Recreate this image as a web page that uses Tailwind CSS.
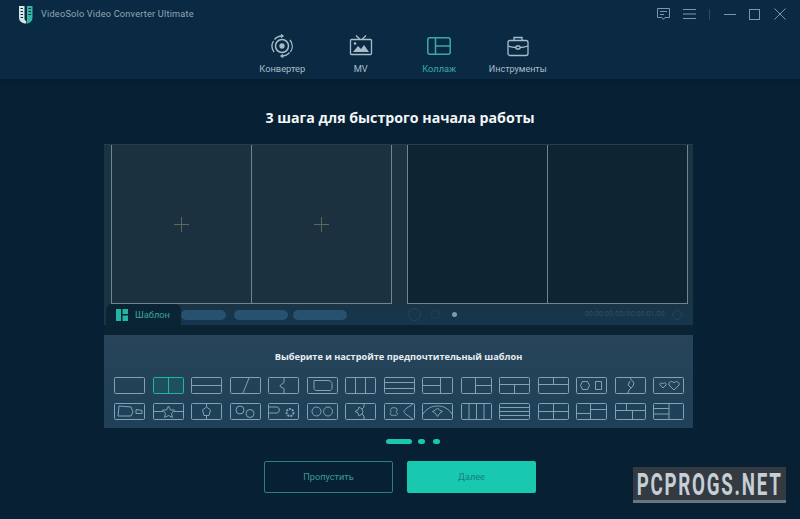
<!DOCTYPE html>
<html lang="en">

<head>
    <meta charset="UTF-8">
    <meta name="viewport" content="width=device-width, initial-scale=1.0">
    <title>VideoSolo Video Converter Ultimate</title>
    <script src="https://cdn.jsdelivr.net/npm/@tailwindcss/browser@4"></script>
</head>

<body class="relative w-[800px] h-[519px] overflow-hidden bg-[#082033] font-['Roboto',sans-serif]">

    <!-- header -->
    <header class="h-[79px] bg-[#0a2a43] relative">
        <div class="flex items-center h-7 pl-[19px]">
            <svg width="14" height="19" viewBox="0 0 14 19" fill="none">
                <path d="M0 1h5.500v12.500c0 1.500 1 2.500 1.500 2.500v2.500C3 18.500 0 16 0 12.500z" fill="#d8e6ea" />
                <path d="M8 1h5.500v11.500c0 3.500-2.500 6-6 6V16c.5 0 .5-1 .5-2.500z" fill="#35b5a5" />
                <path d="M1.500 3.500h2.500M1.500 6.500h2.500M1.500 9.500h2.500M1.500 12.500h2.500M9.500 3.500h2.500M9.500 6.500h2.500M9.500 9.500h2.500" stroke="#0a2a43" stroke-width="1" />
            </svg>
            <span class="ml-2 text-[9.200px] text-[#8fa6b4] tracking-[0.2px]">VideoSolo Video Converter Ultimate</span>
        </div>

        <div class="absolute top-[7px] right-[14px] flex items-center text-[#7b98a8]">
            <svg class="mr-[12px]" width="15" height="14" viewBox="0 0 15 14" fill="none" stroke="currentColor">
                <path d="M1.500 1.500h12v9H9l-1.500 2-1.500-2H1.500z" />
                <path d="M4 4.500h7M4 7.500h4" />
            </svg>
            <svg class="mr-[13px]" width="13" height="12" viewBox="0 0 13 12" fill="none" stroke="currentColor">
                <path d="M0 1.500h13M0 6h13M0 10.500h13" />
            </svg>
            <div class="w-px h-[11px] bg-[#2b4c60] mr-[14px]"></div>
            <svg class="mr-[13px]" width="12" height="12" viewBox="0 0 12 12" fill="none" stroke="currentColor">
                <path d="M0 6.500h12" />
            </svg>
            <svg class="mr-[14px]" width="11" height="11" viewBox="0 0 11 11" fill="none" stroke="currentColor">
                <rect x="0.500" y="0.500" width="10" height="10" />
            </svg>
            <svg width="12" height="12" viewBox="0 0 12 12" fill="none" stroke="currentColor">
                <path d="M0.500 0.500l11 11M11.500 0.500l-11 11" />
            </svg>
        </div>

        <nav class="absolute top-[34px] left-[243px] grid grid-cols-4 w-[314px]">
            <div class="flex flex-col items-center text-[#a9bdc9]">
                <svg class="h-6" width="24" height="24" viewBox="0 0 24 24" fill="none" stroke="currentColor" stroke-width="1.300">
                    <path d="M4.500 5.500A10 10 0 0 1 12 2M19.500 18.500A10 10 0 0 1 12 22M4 18a10 10 0 0 1-.5-11M20 6a10 10 0 0 1 .5 12" />
                    <path d="M11 0.500l2 1.500-2 1.500M13 20.500L11 22l2 1.500" />
                    <circle cx="12" cy="12" r="6.500" stroke-width="1.500" />
                    <circle cx="12" cy="12" r="2" fill="currentColor" />
                </svg>
                <span class="mt-[5px] text-[9.300px] leading-3">Конвертер</span>
            </div>
            <div class="flex flex-col items-center text-[#a9bdc9]">
                <svg width="24" height="24" viewBox="0 0 24 24" fill="none" stroke="currentColor" stroke-width="1.300">
                    <rect x="1.500" y="5.500" width="21" height="15" rx="1" />
                    <path d="M7 1.500l4 4M17 1.500l-4 4" />
                    <path d="M4 18l5-6 3 3 3-4 5 7z" fill="currentColor" stroke="none" />
                    <circle cx="6" cy="9.500" r="1.300" fill="currentColor" stroke="none" />
                </svg>
                <span class="mt-[5px] text-[9.300px] leading-3">MV</span>
            </div>
            <div class="flex flex-col items-center text-[#3da9a5]">
                <svg width="24" height="24" viewBox="0 0 24 24" fill="none" stroke="currentColor" stroke-width="1.500">
                    <rect x="0.800" y="3.800" width="22.400" height="16.400" rx="2" />
                    <path d="M8.500 4v16M8.500 12h14.500" />
                </svg>
                <span class="mt-[5px] text-[9.300px] leading-3">Коллаж</span>
            </div>
            <div class="flex flex-col items-center text-[#a9bdc9]">
                <svg width="24" height="24" viewBox="0 0 24 24" fill="none" stroke="currentColor" stroke-width="1.300">
                    <rect x="2" y="6.500" width="20" height="15" rx="2" />
                    <path d="M8 6.500V3.500h8v3M2 12c3 1 6 1.500 8 1.500M22 12c-3 1-6 1.500-8 1.500" />
                    <rect x="10" y="12" width="4" height="3" rx="1" />
                </svg>
                <span class="mt-[5px] text-[9px] leading-3">Инструменты</span>
            </div>
        </nav>
    </header>
    <div class="h-[6px] bg-gradient-to-b from-[#071d2d] to-[#082033]"></div>

    <!-- main -->
    <main class="flex flex-col">
        <h1 class="mt-[22px] h-[21px] leading-[21px] text-center text-[14.200px] font-bold text-[#f2f6f8] font-['Open_Sans',sans-serif]">3 шага для быстрого начала работы</h1>

        <div class="mt-[16px] ml-[104px] w-[589px] h-[181px] border-t border-[#2a3b4f] bg-gradient-to-b from-[#1b3342] from-[85%] to-[#153650] relative">
            <div class="flex pl-[7px] gap-[15px]">
                <div class="w-[281px] h-[159px] grid grid-cols-2 border-x border-b border-[#6b8695] bg-[#1b3140]">
                    <div class="flex items-center justify-center border-r border-[#6b8695]">
                        <svg width="15" height="15" viewBox="0 0 15 15" stroke="#5c6a55"><path d="M0 7.500h15M7.500 0v15" /></svg>
                    </div>
                    <div class="flex items-center justify-center">
                        <svg width="15" height="15" viewBox="0 0 15 15" stroke="#5c6a55"><path d="M0 7.500h15M7.500 0v15" /></svg>
                    </div>
                </div>
                <div class="w-[281px] h-[159px] grid grid-cols-2 border-x border-b border-[#6b8695] bg-[#0e2432]">
                    <div class="border-r border-[#6b8695]"></div>
                    <div></div>
                </div>
            </div>
            <div class="flex items-center h-[21px] pl-[77px]">
                <div class="w-[45px] h-[10px] rounded-full bg-[#27516e]"></div>
                <div class="ml-[8px] w-[54px] h-[10px] rounded-full bg-[#27516e]"></div>
                <div class="ml-[5px] w-[54px] h-[10px] rounded-full bg-[#27516e]"></div>
                <div class="ml-[61px] w-[13px] h-[13px] rounded-full border border-[#23465c]"></div>
                <div class="ml-[10px] w-[9px] h-[9px] rounded-sm border border-[#1f4054]"></div>
                <div class="ml-[12px] w-[5px] h-[5px] rounded-full bg-[#7f9aa9]"></div>
                <span class="ml-[128px] text-[7px] text-[#2c5167] tracking-[0.15px]">00:00:00.00/00:00:01.00</span>
                <div class="ml-[7px] w-[10px] h-[10px] rounded-full border border-[#23465c]"></div>
            </div>
            <!-- tab over the pills -->
            <div class="absolute left-[2px] top-[159px] w-[75px] h-[21px] bg-[#0a2434] rounded-t-md flex items-center pl-[10px]">
                <svg width="12" height="12" viewBox="0 0 12 12" fill="#21b6a2">
                    <path d="M0 0h5v12H0zM6.500 0H12v5H6.500zM6.500 6.500H12V12H6.500z" />
                </svg>
                <span class="ml-[7px] text-[9.300px] text-[#3ba59e]">Шаблон</span>
            </div>
        </div>
        <div class="ml-[104px] w-[589px] h-[10px] bg-[#0a2333]"></div>

        <section class="ml-[104px] w-[589px] h-[93px] bg-gradient-to-b from-[#274459] to-[#1f4058]">
            <p class="mt-[15px] h-[14px] leading-[14px] text-center text-[9.200px] font-bold text-[#e6eef2] font-['Open_Sans',sans-serif]">Выберите и настройте предпочтительный шаблон</p>

            <div class="mt-[13px] ml-[10px] grid grid-cols-[repeat(15,31px)] gap-x-[7.500px] gap-y-[9px] text-[#7fa3b6]">
                <svg width="31" height="17" viewBox="0 0 31 17" fill="none" stroke="currentColor"><rect x="0.500" y="0.500" width="30" height="16" rx="1" /></svg>
                <svg class="text-[#21b6a2] bg-[#1d4f5c] rounded-[1px]" width="31" height="17" viewBox="0 0 31 17" fill="none" stroke="currentColor"><rect x="0.500" y="0.500" width="30" height="16" rx="1" /><path d="M15.500 1v15" /></svg>
                <svg width="31" height="17" viewBox="0 0 31 17" fill="none" stroke="currentColor"><rect x="0.500" y="0.500" width="30" height="16" rx="1" /><path d="M1 8.500h29" /></svg>
                <svg width="31" height="17" viewBox="0 0 31 17" fill="none" stroke="currentColor"><rect x="0.500" y="0.500" width="30" height="16" rx="1" /><path d="M19 1l-6 15" /></svg>
                <svg width="31" height="17" viewBox="0 0 31 17" fill="none" stroke="currentColor"><rect x="0.500" y="0.500" width="30" height="16" rx="1" /><path d="M16 1v4c0 2-4 2-4 4s4 1 4 3v4" /></svg>
                <svg width="31" height="17" viewBox="0 0 31 17" fill="none" stroke="currentColor"><rect x="0.500" y="0.500" width="30" height="16" rx="1" /><path d="M7 3.500h14c3 0 4 2 4 3v5c0 1-1 2-2 2H9c-1 0-2-1-2-2z" /></svg>
                <svg width="31" height="17" viewBox="0 0 31 17" fill="none" stroke="currentColor"><rect x="0.500" y="0.500" width="30" height="16" rx="1" /><path d="M10.500 1v15M20.500 1v15" /></svg>
                <svg width="31" height="17" viewBox="0 0 31 17" fill="none" stroke="currentColor"><rect x="0.500" y="0.500" width="30" height="16" rx="1" /><path d="M1 5.500h29M1 11.500h29" /></svg>
                <svg width="31" height="17" viewBox="0 0 31 17" fill="none" stroke="currentColor"><rect x="0.500" y="0.500" width="30" height="16" rx="1" /><path d="M1 8.500h17M18.500 1v15" /></svg>
                <svg width="31" height="17" viewBox="0 0 31 17" fill="none" stroke="currentColor"><rect x="0.500" y="0.500" width="30" height="16" rx="1" /><path d="M14.500 1v15M15 8.500h15" /></svg>
                <svg width="31" height="17" viewBox="0 0 31 17" fill="none" stroke="currentColor"><rect x="0.500" y="0.500" width="30" height="16" rx="1" /><path d="M1 7.500h29M15.500 8v8" /></svg>
                <svg width="31" height="17" viewBox="0 0 31 17" fill="none" stroke="currentColor"><rect x="0.500" y="0.500" width="30" height="16" rx="1" /><path d="M1 7.500h29M15.500 1v6" /></svg>
                <svg width="31" height="17" viewBox="0 0 31 17" fill="none" stroke="currentColor"><rect x="0.500" y="0.500" width="30" height="16" rx="1" /><path d="M4.500 8.500l2-4h5l2 4-2 4h-5zM19.500 4.500h6v8h-6z" /></svg>
                <svg width="31" height="17" viewBox="0 0 31 17" fill="none" stroke="currentColor"><rect x="0.500" y="0.500" width="30" height="16" rx="1" /><path d="M15 1l4 5-1 3-4 4-1 3M15 4l-2 4 3 3" /></svg>
                <svg width="31" height="17" viewBox="0 0 31 17" fill="none" stroke="currentColor"><rect x="0.500" y="0.500" width="30" height="16" rx="1" /><path d="M10 11L7 8c-1-2 2-3 3-1 1-2 4-1 3 1zM21 13l-5-5c-1-3 3-5 5-2 2-3 6-1 5 2z" /></svg>

                <svg width="31" height="17" viewBox="0 0 31 17" fill="none" stroke="currentColor"><rect x="0.500" y="0.500" width="30" height="16" rx="1" /><path d="M5 3l12 1 2 5-2 4H4zM22 6.500l6 1v3h-6z" /></svg>
                <svg width="31" height="17" viewBox="0 0 31 17" fill="none" stroke="currentColor"><rect x="0.500" y="0.500" width="30" height="16" rx="1" /><path d="M1 8.500h9M21 8.500h9M15.500 3l2 4h4l-3 3.500 1 4-4-2-4 2 1-4-3-3.500h4z" /></svg>
                <svg width="31" height="17" viewBox="0 0 31 17" fill="none" stroke="currentColor"><rect x="0.500" y="0.500" width="30" height="16" rx="1" /><path d="M15.500 1v3M15.500 13v3M15.500 4l4 3-1.500 5.500h-5L11.500 7z" /></svg>
                <svg width="31" height="17" viewBox="0 0 31 17" fill="none" stroke="currentColor"><rect x="0.500" y="0.500" width="30" height="16" rx="1" /><circle cx="10" cy="7" r="4" /><circle cx="20" cy="10.500" r="4" /></svg>
                <svg width="31" height="17" viewBox="0 0 31 17" fill="none" stroke="currentColor"><rect x="0.500" y="0.500" width="30" height="16" rx="1" /><path d="M1 4h8c3 0 3 6 0 6H1" /><circle cx="22" cy="9.500" r="3.500" stroke-width="2" stroke-dasharray="2 1" /></svg>
                <svg width="31" height="17" viewBox="0 0 31 17" fill="none" stroke="currentColor"><rect x="0.500" y="0.500" width="30" height="16" rx="1" /><circle cx="9.500" cy="8.500" r="4.500" /><circle cx="21" cy="8.500" r="4.500" /></svg>
                <svg width="31" height="17" viewBox="0 0 31 17" fill="none" stroke="currentColor"><rect x="0.500" y="0.500" width="30" height="16" rx="1" /><path d="M19 1v3l-2 2 1 2.500-1 2.500 2 2v3M17 6l-3-2-1 3-3 1.500 3 1.500 1 3 3-2" /></svg>
                <svg width="31" height="17" viewBox="0 0 31 17" fill="none" stroke="currentColor"><rect x="0.500" y="0.500" width="30" height="16" rx="1" /><path d="M8 5c2-1 2 0 2 0s2-1 3 1-1 2-1 2.500 2 1 1 3-3 .5-3 .5-1 1-3 0 0-2.500 0-3.500-2-2 1-3.500zM29 1c-4 3-9 5-9 7.500S25 13 29 16" /></svg>
                <svg width="31" height="17" viewBox="0 0 31 17" fill="none" stroke="currentColor"><rect x="0.500" y="0.500" width="30" height="16" rx="1" /><path d="M1 11C5 5 10 3 15.500 3S26 5 30 11M15.500 5l2 2 3 1.500-3 2-2 3-2-3-3-2 3-1.500z" /></svg>
                <svg width="31" height="17" viewBox="0 0 31 17" fill="none" stroke="currentColor"><rect x="0.500" y="0.500" width="30" height="16" rx="1" /><path d="M8 1v15M15.500 1v15M23 1v15" /></svg>
                <svg width="31" height="17" viewBox="0 0 31 17" fill="none" stroke="currentColor"><rect x="0.500" y="0.500" width="30" height="16" rx="1" /><path d="M1 4.500h29M1 8.500h29M1 12.500h29" /></svg>
                <svg width="31" height="17" viewBox="0 0 31 17" fill="none" stroke="currentColor"><rect x="0.500" y="0.500" width="30" height="16" rx="1" /><path d="M1 8.500h29M15.500 1v15" /></svg>
                <svg width="31" height="17" viewBox="0 0 31 17" fill="none" stroke="currentColor"><rect x="0.500" y="0.500" width="30" height="16" rx="1" /><path d="M14.500 1v15M1 10.500h14M15 6.500h15" /></svg>
                <svg width="31" height="17" viewBox="0 0 31 17" fill="none" stroke="currentColor"><rect x="0.500" y="0.500" width="30" height="16" rx="1" /><path d="M1 7.500h29M11.500 1v6.500M17.500 8v8" /></svg>
                <svg width="31" height="17" viewBox="0 0 31 17" fill="none" stroke="currentColor"><rect x="0.500" y="0.500" width="30" height="16" rx="1" /><path d="M16 1v15M1 5.500h15M1 11h15" /></svg>
            </div>
        </section>

        <div class="mt-[10px] ml-[386px] flex items-center gap-[6px] h-[7px]">
            <div class="w-[26px] h-[5px] rounded-full bg-[#1ac7ae]"></div>
            <div class="w-[7px] h-[5px] rounded-full bg-[#1ac7ae]"></div>
            <div class="ml-[2px] w-[7px] h-[5px] rounded-full bg-[#1ac7ae]"></div>
        </div>

        <div class="mt-[16px] ml-[264px] flex gap-[14px]">
            <button class="w-[129px] h-[32px] rounded-[2px] border border-[#2e7d7f] text-[9.200px] text-[#3a9c9b]">Пропустить</button>
            <button class="w-[129px] h-[32px] rounded-[2px] bg-[#18c9b0] text-[9.200px] text-[#167f7f]">Далее</button>
        </div>
    </main>

    <!-- watermark -->
    <div class="absolute left-[633px] top-[467px] w-[153px] h-[36px] bg-[#333a42] border-b-[3px] border-[#6c7480] flex items-center justify-center">
        <span class="text-[32px] leading-none font-bold text-[#c6ced6] font-['Roboto',sans-serif] tracking-[3px] scale-x-[0.585] whitespace-nowrap">PCPROGS.NET</span>
    </div>

</body>

</html>
